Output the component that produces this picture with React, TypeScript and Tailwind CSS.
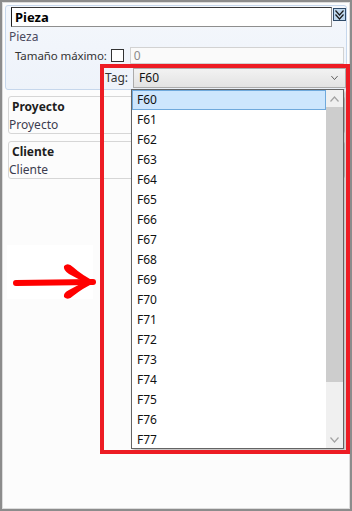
const tags = Array.from({ length: 18 }, (_, i) => `F${60 + i}`);

function Chevron({ up = false, className = "" }: { up?: boolean; className?: string }) {
  return (
    <svg width="9" height="6" viewBox="0 0 9 6" className={className}>
      <path
        d={up ? "M0.5 5.5 L4.5 1 L8.5 5.5" : "M0.5 0.5 L4.5 5 L8.5 0.5"}
        fill="none"
        stroke="currentColor"
        strokeWidth="1.2"
      />
    </svg>
  );
}

function Section({ title }: { title: string }) {
  return (
    <div className="ml-[3px] mr-[2px] h-[38px] rounded-[3px] border border-[#d6d6d6] bg-[#fcfcfc] relative">
      <div className="absolute left-[3px] top-[2px] font-bold text-[#1e1e1e]">{title}</div>
      <div className="absolute left-0 top-[20px] text-[#3c3c50]">{title}</div>
    </div>
  );
}

export default function App() {
  return (
    <div
      className="w-[352px] h-[511px] border-2 border-[#8c8c8c] bg-[#fcfcfc] relative overflow-hidden text-[12px] leading-[16px]"
      style={{ fontFamily: '"Noto Sans", "Open Sans", sans-serif' }}
    >
      <div className="h-full border border-[#dcdcdc] p-[2px] flex flex-col">
        {/* Pieza header panel */}
        <div className="h-[85px] shrink-0 rounded-[3px] border border-[#c6d7ec] bg-gradient-to-b from-[#f4f7fc] to-[#eef3fa]">
          <div className="flex items-start pl-[5px] pt-[1px]">
            <div className="w-[321px] h-[20px] border border-[#8e8e8e] border-l-[#1e1e1e] border-t-[#3a3a3a] bg-white pl-[3px] font-bold text-[13px] leading-[18px] text-black">
              Pieza
            </div>
            <div className="ml-[1px] mt-[1px] w-[13px] h-[13px] border border-[#2f4a68] bg-[#bfd8ee] flex flex-col items-center justify-center text-[#1a1a1a]">
              <Chevron className="-mb-[2px]" />
              <Chevron />
            </div>
          </div>
          <div className="pl-[3px] mt-[2px] text-[#4a4a5e]">Pieza</div>
          <div className="flex items-center mt-[2px] pl-[9px]">
            <span className="shrink-0 whitespace-nowrap text-[11.5px] tracking-[-0.1px] text-[#333]">Tamaño máximo:</span>
            <span className="shrink-0 ml-[4px] w-[13px] h-[13px] border border-[#333] bg-white" />
            <div className="shrink-0 ml-[6px] w-[214px] h-[17px] border border-[#d2d2d2] bg-[#fafafa] pl-[3px] text-[#8a8a8a] leading-[15px]">
              0
            </div>
          </div>
          <div className="flex items-center mt-[4px] pl-[99px]">
            <span className="text-[#333]">Tag:</span>
            <div className="ml-[5px] w-[214px] h-[20px] border border-[#acacac] bg-gradient-to-b from-[#f2f2f2] to-[#e3e3e3] flex items-center pl-[5px] pr-[7px] justify-between text-[#111]">
              <span>F60</span>
              <Chevron className="text-[#555] w-[7px]" />
            </div>
          </div>
        </div>

        <div className="mt-[6px] flex flex-col gap-[7px]">
          <Section title="Proyecto" />
          <Section title="Cliente" />
        </div>
      </div>

      {/* Annotation arrow */}
      <div className="absolute left-[5px] top-[243px] w-[86px] h-[54px] bg-white">
        <svg width="90" height="54" viewBox="0 0 90 54" className="absolute left-0 top-0 overflow-visible">
          <path d="M9 38 L86 37" stroke="#ff0000" strokeWidth="6" strokeLinecap="round" fill="none" />
          <path
            d="M57 21 Q61 17 66 22 Q76 31 89 37 Q76 43 66 51 Q61 56 57 52 Q56 48 62 45 L77 37 L62 29 Q56 25 57 21 Z"
            fill="#ff0000"
          />
        </svg>
      </div>

      {/* Dropdown list */}
      <div className="absolute left-[129px] top-[87px] w-[213px] h-[360px] border border-[#646464] bg-white flex shadow-[2px_2px_3px_rgba(0,0,0,0.25)]">
        <div className="flex-1 flex flex-col overflow-hidden">
          {tags.map((t, i) => (
            <div
              key={t}
              className={
                i === 0
                  ? "h-[20px] shrink-0 border border-[#6fa9dc] bg-[#cde6fd] pl-[4px] leading-[18px] text-[#111]"
                  : "h-[20px] shrink-0 pl-[5px] leading-[20px] text-[#111]"
              }
            >
              {t}
            </div>
          ))}
        </div>
        <div className="w-[17px] bg-[#f0f0f0] flex flex-col">
          <div className="h-[17px] flex items-center justify-center text-[#a3a3a3]">
            <Chevron up />
          </div>
          <div className="h-[275px] bg-[#cdcdcd]" />
          <div className="flex-1" />
          <div className="h-[17px] flex items-center justify-center text-[#a3a3a3]">
            <Chevron />
          </div>
        </div>
      </div>

      {/* Red highlight frame */}
      <div className="absolute left-[98px] top-[62px] w-[250px] h-[390px] border-[4px] border-[#ed1c24]" />
    </div>
  );
}
